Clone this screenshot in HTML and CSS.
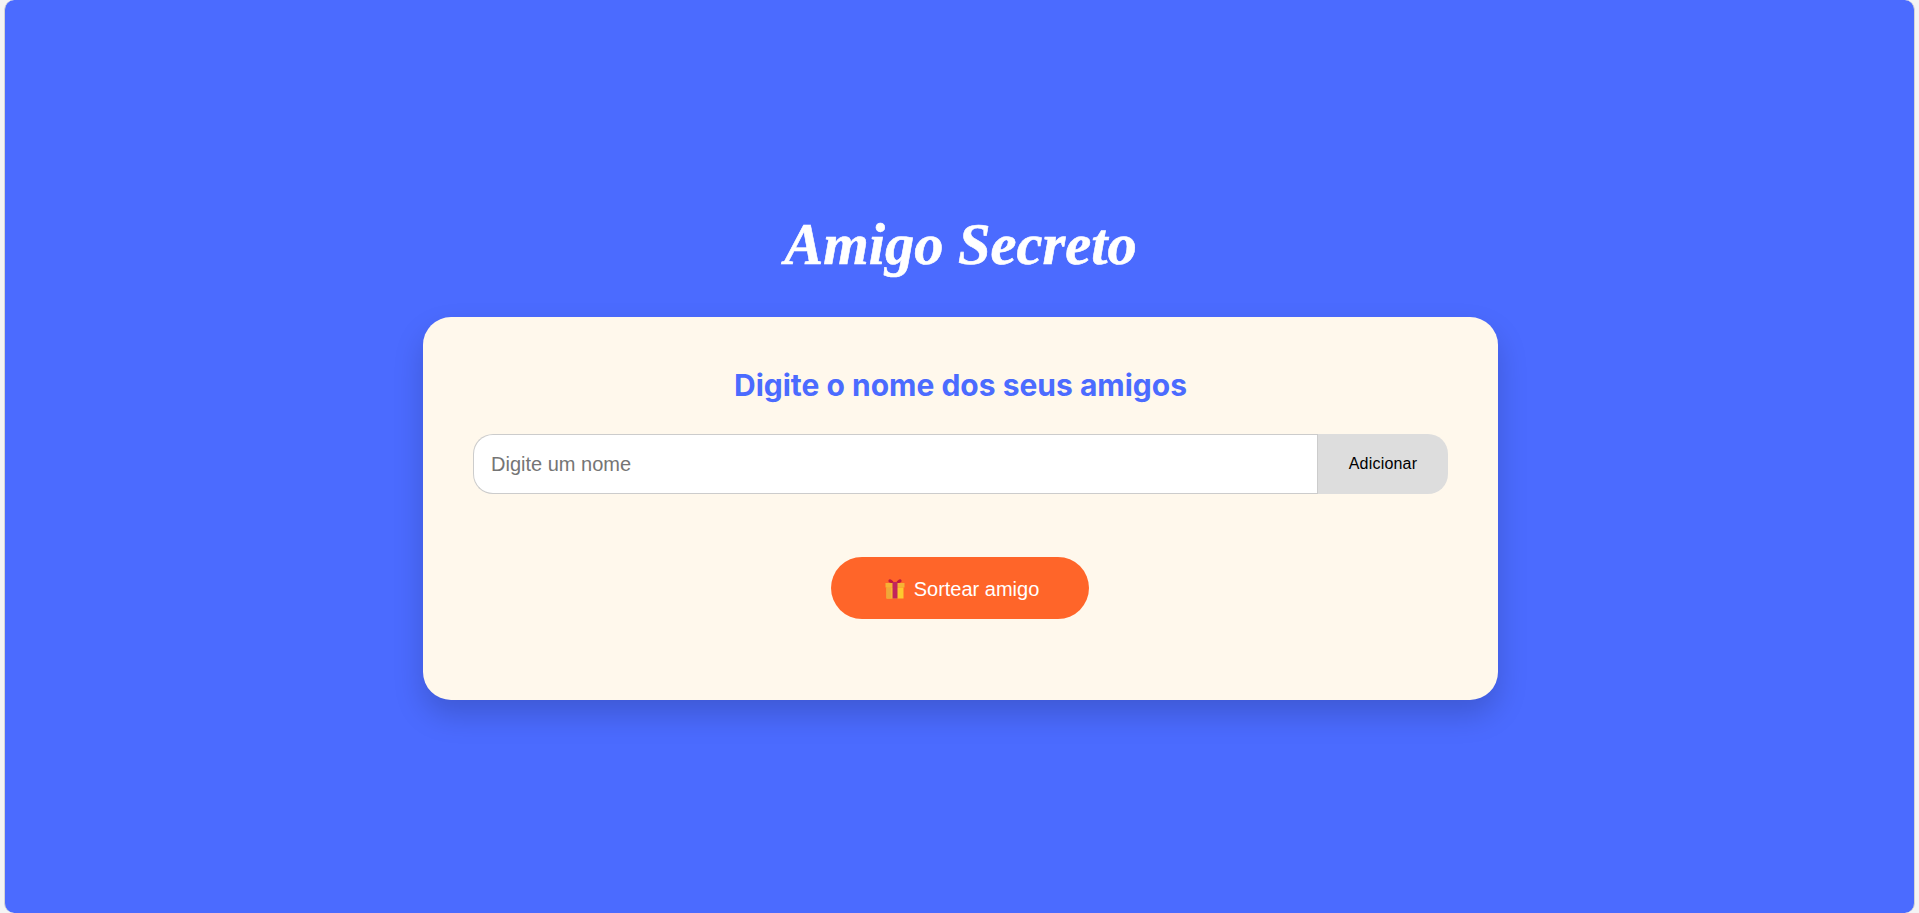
FILE: index.html
```html
<!DOCTYPE html>
<html lang="pt-BR">
<head>
  <meta charset="utf-8">
  <title>Amigo Secreto</title>
  <link rel="stylesheet" href="styles.css">
</head>
<body>
  <main class="page">
    <h1 class="title">Amigo Secreto</h1>
    <section class="card">
      <h2 class="subtitle">Digite o nome dos seus amigos</h2>
      <div class="input-row">
        <input class="name-input" type="text" placeholder="Digite um nome">
        <button class="add-button" type="button">Adicionar</button>
      </div>
      <button class="draw-button" type="button">
        <svg class="gift" viewBox="0 0 20 20" width="20" height="20" aria-hidden="true">
          <path d="M9 4C7 0 4 -0.5 3.5 1.5C3 3.5 6 4.5 9 4Z" fill="#c2183f"/>
          <path d="M11 4C13 0 16 -0.5 16.5 1.5C17 3.5 14 4.5 11 4Z" fill="#c2183f"/>
          <rect x="0.5" y="4" width="19" height="4.5" fill="#f5b335"/>
          <rect x="1.5" y="8.5" width="17" height="11" fill="#fdc92f"/>
          <rect x="1.5" y="8.5" width="5" height="11" fill="#eea83a"/>
          <rect x="7.5" y="3" width="5" height="16.5" fill="#c2255c"/>
        </svg>
        Sortear amigo
      </button>
    </section>
  </main>
</body>
</html>
```

FILE: styles.css
```css
html, body {
  height: 100%;
}

body {
  margin: 0;
  padding: 0 4px;
  box-sizing: border-box;
  background: #f4f4f4;
  font-family: "Liberation Sans", Arial, sans-serif;
}

.page {
  height: 100%;
  box-sizing: border-box;
  border-left: 1px solid #d4d4d4;
  border-right: 1px solid #d4d4d4;
  border-radius: 10px;
  background: #4b6bff;
  display: flex;
  flex-direction: column;
  align-items: center;
  padding: 213px 0 0 2px;
}

.title {
  margin: 0 0 30px;
  height: 74px;
  line-height: 64px;
  font-family: "Liberation Serif", "DejaVu Serif", serif;
  font-style: italic;
  font-weight: 700;
  font-size: 58.5px;
  -webkit-text-stroke: 0.6px #fff;
  color: #fff;
}

.card {
  width: 1075px;
  height: 383px;
  box-sizing: border-box;
  padding: 50px 50px 0;
  background: #fff8ec;
  border-radius: 28px;
  box-shadow: 0 15px 30px rgba(0, 0, 0, 0.17);
  display: flex;
  flex-direction: column;
  align-items: center;
}

.subtitle {
  margin: 0 0 30px;
  line-height: 37px;
  font-family: Inter, sans-serif;
  font-weight: 700;
  font-size: 30px;
  color: #4b6bff;
}

.input-row {
  width: 100%;
  display: flex;
  height: 60px;
}

.name-input {
  flex: 1;
  min-width: 0;
  box-sizing: border-box;
  padding: 0 17px;
  border: 1px solid #ccc;
  border-right: none;
  border-radius: 20px 0 0 20px;
  background: #fff;
  font-family: inherit;
  font-size: 20px;
}

.name-input::placeholder {
  color: #757575;
}

.add-button {
  width: 131px;
  border: none;
  border-left: 1px solid #ccc;
  border-radius: 0 20px 20px 0;
  background: #ddd;
  color: #000;
  font-family: inherit;
  font-size: 16px;
  letter-spacing: 0.2px;
}

.draw-button {
  margin: 63px 1px 0 0;
  width: 258px;
  height: 62px;
  padding: 2px 0 0 4px;
  border: none;
  border-radius: 31px;
  background: #ff6529;
  color: #fff;
  font-family: inherit;
  font-size: 20px;
  display: flex;
  align-items: center;
  justify-content: center;
  gap: 9px;
}

.gift {
  flex: none;
}
```
